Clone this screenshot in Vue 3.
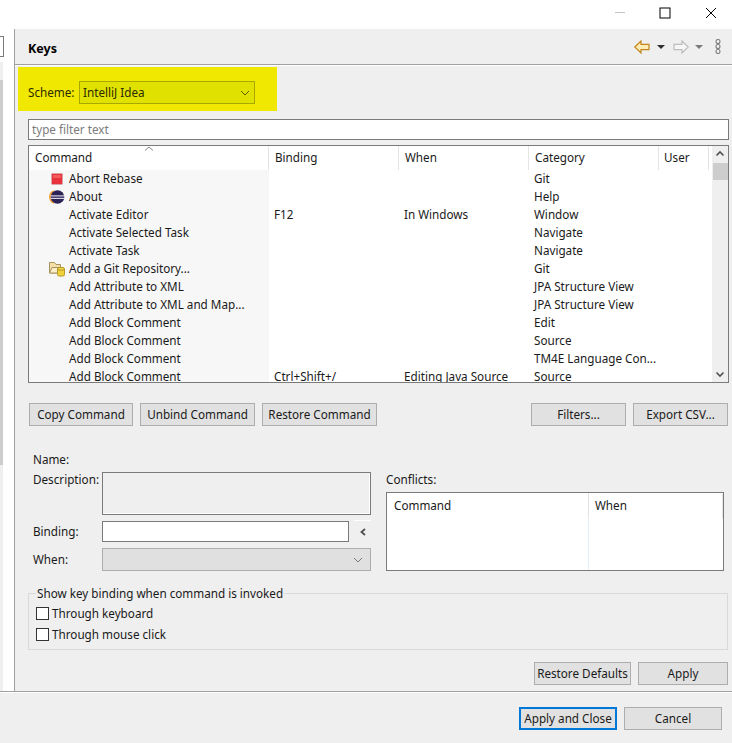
<script setup>
const rows = [
  { name: 'Abort Rebase', icon: 'stop', cat: 'Git' },
  { name: 'About', icon: 'eclipse', cat: 'Help' },
  { name: 'Activate Editor', bind: 'F12', when: 'In Windows', cat: 'Window' },
  { name: 'Activate Selected Task', cat: 'Navigate' },
  { name: 'Activate Task', cat: 'Navigate' },
  { name: 'Add a Git Repository...', icon: 'repo', cat: 'Git' },
  { name: 'Add Attribute to XML', cat: 'JPA Structure View' },
  { name: 'Add Attribute to XML and Map...', cat: 'JPA Structure View' },
  { name: 'Add Block Comment', cat: 'Edit' },
  { name: 'Add Block Comment', cat: 'Source' },
  { name: 'Add Block Comment', cat: 'TM4E Language Con...' },
  { name: 'Add Block Comment', bind: 'Ctrl+Shift+/', when: 'Editing Java Source', cat: 'Source' }
]
</script>

<template>
  <div class="window">
    <div class="titlebar">
      <svg class="win-icon min" width="12" height="12" viewBox="0 0 12 12"><path d="M1 5.500h10" stroke="#c4c4c4" stroke-width="1" /></svg>
      <svg class="win-icon max" width="12" height="12" viewBox="0 0 12 12"><rect x="1" y="1" width="10" height="10" fill="none" stroke="#000" /></svg>
      <svg class="win-icon close" width="12" height="12" viewBox="0 0 12 12"><path d="M1 1l10 10M11 1L1 11" stroke="#000" stroke-width="1" /></svg>
    </div>

    <div class="body">
      <div class="side">
        <div class="side-box"></div>
        <div class="side-track"><div class="side-thumb"></div></div>
      </div>

      <div class="panel">
        <div class="head">
          <span class="title">Keys</span>
          <div class="nav">
            <svg width="16" height="14" viewBox="0 0 16 14"><path d="M0.800 7L7 1v3.300h8v5.400H7V13z" fill="#fdecb4" stroke="#c4861c" stroke-width="1.200" /></svg>
            <span class="tri dark"></span>
            <svg width="16" height="14" viewBox="0 0 16 14"><path d="M15.200 7L9 1v3.300H1v5.400h8V13z" fill="#f6f6f6" stroke="#bdbdbd" stroke-width="1.200" /></svg>
            <span class="tri gray"></span>
            <svg width="6" height="15" viewBox="0 0 6 15"><g fill="#f6f6f6" stroke="#7f7f7f" stroke-width="1.100"><circle cx="3" cy="2.500" r="2" /><circle cx="3" cy="7.500" r="2" /><circle cx="3" cy="12.500" r="2" /></g></svg>
          </div>
        </div>

        <div class="scheme">
          <span class="scheme-label">Scheme:</span>
          <div class="scheme-select">
            <span>IntelliJ Idea</span>
            <svg width="10" height="6" viewBox="0 0 10 6"><path d="M1 1l4 4 4-4" fill="none" stroke="#5c5c00" /></svg>
          </div>
        </div>

        <div class="filter">type filter text</div>

        <div class="table">
          <div class="table-main">
            <div class="thead">
              <div class="th c-cmd">Command
                <svg class="sort" width="10" height="5" viewBox="0 0 10 5"><path d="M1 4.500L5 1l4 3.500" fill="none" stroke="#8a8a8a" /></svg>
              </div>
              <div class="th c-col">Binding</div>
              <div class="th c-col">When</div>
              <div class="th c-col">Category</div>
              <div class="th c-user">User</div>
            </div>
            <div class="tbody">
              <div v-for="(r, i) in rows" :key="i" class="row">
                <div class="cell-cmd">
                  <span class="ico">
                    <svg v-if="r.icon === 'stop'" width="16" height="16" viewBox="0 0 16 16">
                      <rect x="2.500" y="2.500" width="11" height="11" rx="1" fill="#e8323c" stroke="#d9a3a8" />
                      <rect x="4" y="4" width="8" height="3" fill="#f25a5e" />
                    </svg>
                    <svg v-else-if="r.icon === 'eclipse'" width="16" height="16" viewBox="0 0 16 16">
                      <path d="M5 1.300A7 7 0 0 0 5 14.700z" fill="#f2a33a" />
                      <circle cx="8.500" cy="8" r="6.800" fill="#2c2255" />
                      <rect x="1.500" y="6.300" width="14" height="1.200" fill="#d8d6e4" />
                      <rect x="1.500" y="8.800" width="14" height="1.200" fill="#d8d6e4" />
                    </svg>
                    <svg v-else-if="r.icon === 'repo'" width="18" height="16" viewBox="0 0 18 16">
                      <path d="M1.500 12V1.500h5l1.500 2h4.500V12z" fill="#f5dfa8" stroke="#a89360" />
                      <path d="M1.500 12l2.500-5.500h9.500L11 12z" fill="#fbeec8" stroke="#a89360" />
                      <rect x="9.500" y="6.500" width="7" height="8.500" rx="1.500" fill="#f2d23c" stroke="#b39a2a" />
                      <path d="M9.500 8.500c1.500 1 5.500 1 7 0" fill="none" stroke="#b39a2a" />
                    </svg>
                  </span>
                  <span>{{ r.name }}</span>
                </div>
                <div class="cell">{{ r.bind }}</div>
                <div class="cell">{{ r.when }}</div>
                <div class="cell cat">{{ r.cat }}</div>
              </div>
            </div>
          </div>
          <div class="vscroll">
            <svg width="10" height="7" viewBox="0 0 10 7"><path d="M1.500 5.500L5 2l3.500 3.500" fill="none" stroke="#505050" stroke-width="1.600" /></svg>
            <div class="vthumb"></div>
            <svg class="vdown" width="10" height="7" viewBox="0 0 10 7"><path d="M1.500 1.500L5 5l3.500-3.500" fill="none" stroke="#505050" stroke-width="1.600" /></svg>
          </div>
        </div>

        <div class="actions">
          <button class="btn b-copy">Copy Command</button>
          <button class="btn b-unbind">Unbind Command</button>
          <button class="btn b-restore">Restore Command</button>
          <button class="btn b-filters">Filters...</button>
          <button class="btn b-export">Export CSV...</button>
        </div>

        <div class="details">
          <div class="form">
            <div class="name-line">Name:</div>
            <div class="form-row desc-row">
              <span class="lbl">Description:</span>
              <div class="desc"></div>
            </div>
            <div class="form-row bind-row">
              <span class="lbl up">Binding:</span>
              <div class="bind-input"></div>
              <span class="bind-arrow">
                <svg width="8" height="8" viewBox="0 0 8 8"><path d="M6 1L2.500 4 6 7" fill="none" stroke="#505050" stroke-width="1.800" /></svg>
              </span>
            </div>
            <div class="form-row when-row">
              <span class="lbl up">When:</span>
              <div class="when-select">
                <svg width="10" height="6" viewBox="0 0 10 6"><path d="M1 1l4 4 4-4" fill="none" stroke="#777" /></svg>
              </div>
            </div>
          </div>
          <div class="conflicts">
            <div class="conf-label">Conflicts:</div>
            <div class="conf-table">
              <div class="conf-col conf-cmd"><div class="conf-th">Command</div></div>
              <div class="conf-col conf-when"><div class="conf-th">When</div></div>
            </div>
          </div>
        </div>

        <fieldset class="group">
          <legend>Show key binding when command is invoked</legend>
          <label class="check first"><span class="box"></span><span class="up">Through keyboard</span></label>
          <label class="check"><span class="box"></span><span class="up">Through mouse click</span></label>
        </fieldset>

        <div class="page-btns">
          <button class="btn b-defaults">Restore Defaults</button>
          <button class="btn b-apply">Apply</button>
        </div>
      </div>
    </div>

    <div class="footer">
      <button class="btn b-close">Apply and Close</button>
      <button class="btn b-cancel">Cancel</button>
    </div>
  </div>
</template>

<style>
html, body { margin: 0; background: #fff; }
</style>

<style scoped>
.window {
  width: 732px;
  height: 743px;
  display: flex;
  flex-direction: column;
  font-family: "Noto Sans", "Open Sans", sans-serif;
  font-size: 11.7px;
  color: #1a1a1a;
  overflow: hidden;
  background: #fff;
}
.titlebar {
  height: 29px;
  flex: none;
  position: relative;
  background: #fff;
}
.win-icon { position: absolute; top: 7px; }
.min { left: 614px; }
.max { left: 659px; }
.close { left: 705px; }

.body {
  height: 662px;
  flex: none;
  display: flex;
}
.side {
  width: 14px;
  flex: none;
  border-right: 1px solid #a0a0a0;
  display: flex;
  flex-direction: column;
  background: #fff;
}
.side-box {
  width: 3px;
  height: 19px;
  margin-top: 7px;
  border: 1px solid #7a7a7a;
  border-left: 0;
  background: #fff;
  flex: none;
}
.side-track {
  width: 3px;
  margin-top: 5px;
  flex: 1;
  background: #efefef;
  padding-top: 18px;
}
.side-thumb { height: 385px; background: #cdcdcd; }

.panel {
  flex: 1;
  min-width: 0;
  background: #efefef;
  display: flex;
  flex-direction: column;
  padding-left: 13px;
}

.head {
  height: 35px;
  margin-left: -13px;
  padding: 0 11px 0 13px;
  border-bottom: 1px solid #a0a0a0;
  box-shadow: 0 1px 0 #fff;
  display: flex;
  align-items: center;
  justify-content: space-between;
  flex: none;
  box-sizing: content-box;
}
.title { font-weight: 700; font-size: 12.5px; color: #000; margin-top: 3px; }
.nav { display: flex; align-items: center; }
.tri {
  width: 0; height: 0;
  border-left: 4px solid transparent;
  border-right: 4px solid transparent;
  margin-top: 1px;
}
.tri.dark { border-top: 4px solid #2e2e2e; margin-left: 7px; margin-right: 8px; }
.tri.gray { border-top: 4px solid #7b7b7b; margin-left: 6px; margin-right: 12px; }

.scheme {
  width: 259px;
  height: 44px;
  margin: 2px 0 0 -10px;
  padding: 14px 22px 0 10px;
  box-sizing: border-box;
  background: #f0e800;
  display: flex;
  align-items: flex-start;
  flex: none;
  color: #2a2a00;
}
.scheme-label { width: 51px; flex: none; line-height: 23px; }
.scheme-select {
  width: 176px;
  height: 23px;
  box-sizing: border-box;
  background: #e1e100;
  border: 1px solid #a8a800;
  display: flex;
  align-items: center;
  justify-content: space-between;
  padding: 0 4px 0 3px;
  line-height: 21px;
}
.filter {
  width: 701px;
  height: 21px;
  box-sizing: border-box;
  margin-top: 8px;
  border: 1px solid #7a7a7a;
  background: #fff;
  color: #7c7c7c;
  padding-left: 3px;
  line-height: 19px;
  flex: none;
}

.table {
  width: 701px;
  height: 238px;
  box-sizing: border-box;
  margin-top: 5px;
  border: 1px solid #7a7a7a;
  background: #fff;
  display: flex;
  flex: none;
  overflow: hidden;
}
.table-main { width: 680px; flex: none; overflow: hidden; }
.thead { display: flex; height: 24px; background: #fff; }
.th {
  box-sizing: border-box;
  height: 24px;
  line-height: 23px;
  border-right: 1px solid #e4e4e4;
  padding-left: 6px;
  position: relative;
  flex: none;
}
.c-cmd { width: 240px; }
.c-col { width: 130px; }
.c-user { width: 50px; padding-left: 5px; }
.sort { position: absolute; left: 115px; top: 0; }
.row { display: flex; height: 18px; line-height: 16px; white-space: nowrap; }
.cell-cmd {
  width: 240px;
  flex: none;
  background: #f7f7f7;
  display: flex;
  align-items: flex-start;
  padding-left: 16px;
  box-sizing: border-box;
}
.ico {
  width: 24px;
  height: 18px;
  flex: none;
  display: flex;
  align-items: center;
  justify-content: center;
}
.cell {
  width: 130px;
  flex: none;
  box-sizing: border-box;
  padding-left: 5px;
}
.cell.cat { width: 180px; }
.vscroll {
  width: 16px;
  margin-left: 3px;
  background: #efefef;
  flex: none;
  display: flex;
  flex-direction: column;
  align-items: center;
  padding-top: 4px;
  box-sizing: border-box;
}
.vthumb { width: 15px; height: 17px; background: #cdcdcd; margin-top: 6px; }
.vdown { margin-top: auto; margin-bottom: 4px; }

.btn {
  font: inherit;
  color: #1a1a1a;
  height: 23px;
  box-sizing: border-box;
  background: #e1e1e1;
  border: 1px solid #adadad;
  padding: 0;
  flex: none;
  line-height: 19px;
}
.actions {
  display: flex;
  align-items: center;
  margin-top: 20px;
  margin-left: 1px;
  flex: none;
}
.b-copy { width: 104px; }
.b-unbind { width: 115px; margin-left: 7px; }
.b-restore { width: 115px; margin-left: 7px; }
.b-filters { width: 95px; margin-left: 154px; }
.b-export { width: 95px; margin-left: 7px; }

.details {
  display: flex;
  margin-top: 24px;
  flex: none;
  padding-left: 5px;
}
.form { width: 338px; flex: none; }
.name-line { height: 20px; line-height: 18px; }
.form-row { display: flex; }
.lbl { width: 69px; flex: none; }
.up { margin-bottom: 2px; }
.desc-row { height: 43px; margin-top: 2px; }
.desc-row .lbl { line-height: 14px; }
.desc {
  width: 269px;
  height: 43px;
  box-sizing: border-box;
  border: 1px solid #7a7a7a;
  box-shadow: inset -1px -1px 0 #fff;
}
.bind-row { margin-top: 6px; height: 21px; align-items: center; }
.bind-input {
  width: 247px;
  height: 21px;
  box-sizing: border-box;
  border: 1px solid #7a7a7a;
  background: #fff;
  flex: none;
}
.bind-arrow {
  width: 17px;
  height: 22px;
  box-sizing: border-box;
  margin: -1px 0 0 5px;
  align-self: flex-start;
  border-top: 1px solid #fff;
  display: flex;
  align-items: center;
  justify-content: center;
  flex: none;
}
.when-row { margin-top: 6px; height: 23px; align-items: center; }
.when-select {
  width: 269px;
  height: 23px;
  box-sizing: border-box;
  background: #e0e0e0;
  border: 1px solid #adadad;
  display: flex;
  align-items: center;
  justify-content: flex-end;
  padding-right: 7px;
}
.conflicts {
  margin-left: 15px;
  padding-top: 21px;
}
.conf-label { line-height: 16px; height: 19px; }
.conf-table {
  width: 338px;
  height: 79px;
  box-sizing: border-box;
  margin-top: 2px;
  border: 1px solid #7a7a7a;
  background: #fff;
  display: flex;
}
.conf-col { box-sizing: border-box; flex: none; }
.conf-cmd {
  width: 202px;
  border-right: 1px solid #e6edf7;
  padding: 1px 0;
}
.conf-when { width: 133px; padding: 1px 0; }
.conf-th {
  height: 24px;
  line-height: 22px;
  box-sizing: border-box;
  padding-left: 6px;
  border-right: 1px solid #e4e4e4;
  margin-right: -1px;
}
.conf-cmd .conf-th { padding-left: 7px; }

.group {
  width: 700px;
  height: 65px;
  box-sizing: border-box;
  margin: 14px 0 0 0;
  padding: 0 0 0 7px;
  border: 1px solid #d9d9d9;
  flex: none;
  min-width: 0;
}
.group legend {
  padding: 0 1px;
  line-height: 17px;
  height: 17px;
}
.check {
  display: flex;
  align-items: center;
  height: 21px;
  white-space: nowrap;
}
.check.first { margin-top: 1px; }
.box {
  width: 13px;
  height: 13px;
  box-sizing: border-box;
  border: 1px solid #333;
  background: #fff;
  margin-right: 3px;
  flex: none;
}
.page-btns {
  display: flex;
  justify-content: flex-end;
  margin-top: 12px;
  padding-right: 4px;
  flex: none;
}
.b-defaults { width: 97px; }
.b-apply { width: 90px; margin-left: 7px; }

.footer {
  flex: 1;
  border-top: 1px solid #a0a0a0;
  box-shadow: inset 0 1px 0 #fff;
  background: #efefef;
  display: flex;
  justify-content: flex-end;
  align-items: flex-start;
  padding: 15px 10px 0 0;
  gap: 7px;
}
.b-close { width: 98px; border: 2px solid #0078d7; }
.b-cancel { width: 98px; }
</style>
